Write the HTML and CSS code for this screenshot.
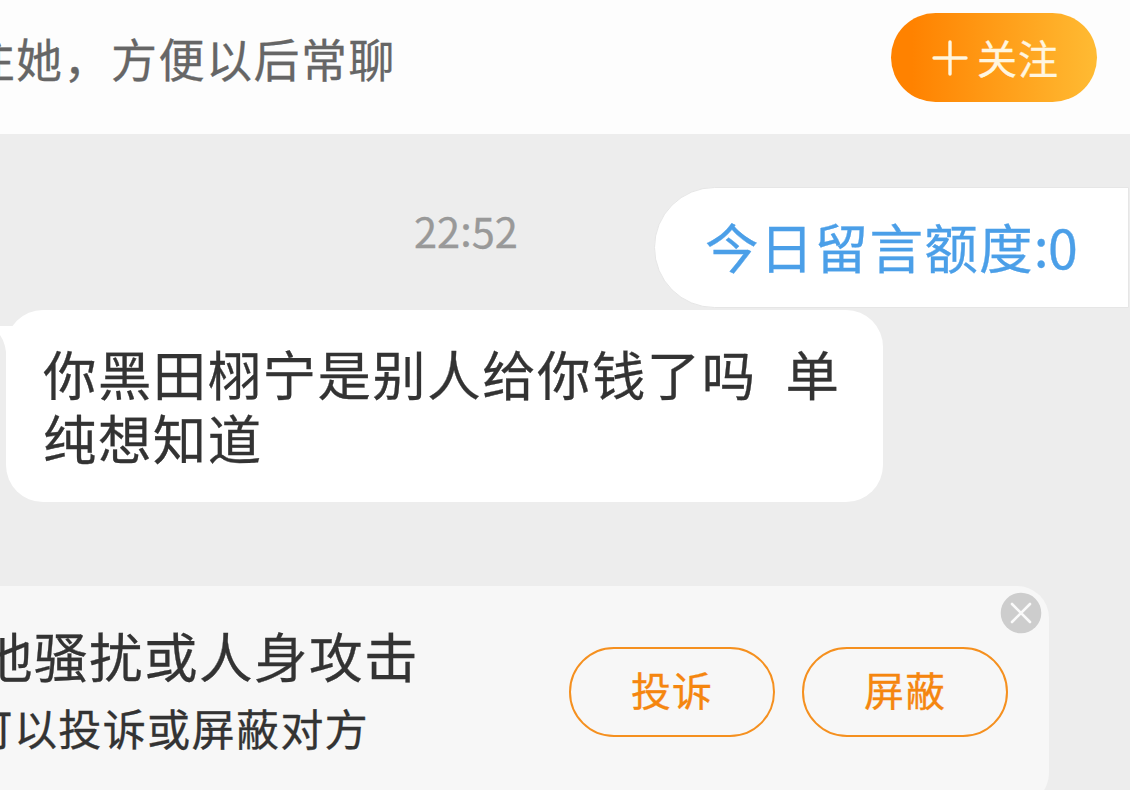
FILE: index.html
```html
<!DOCTYPE html>
<html lang="zh-CN">
<head>
<meta charset="utf-8">
<title>聊天</title>
<link rel="stylesheet" href="styles.css">
</head>
<body>
<div class="screen">
  <header class="follow-bar">
    <div class="follow-text"><span>注她，方便以后常聊</span></div>
    <button class="follow-btn">
      <svg class="plus" width="36" height="36" viewBox="0 0 36 36"><path d="M18 2v32M2 18h32" fill="none" stroke="#fff6e0" stroke-width="3.4" stroke-linecap="round"/></svg>
      <span>关注</span>
    </button>
  </header>
  <main class="chat">
    <div class="meta-row">
      <time class="time">22<span class="colon">:</span>52</time>
      <div class="quota">今日留言额度<span class="colon">:</span>0</div>
    </div>
    <div class="bubble">
      <svg class="tail" width="20" height="50" viewBox="0 0 20 50"><path d="M0 16H20V50H6.500Q6.500 34 0 25Z" fill="#fff"/></svg>
      <p class="message">你黑田栩宁是别人给你钱了吗<span class="gap">&nbsp; </span>单<br>纯想知道</p>
    </div>
    <section class="report">
      <div class="report-copy">
        <div class="report-title"><span>他骚扰或人身攻击</span></div>
        <div class="report-sub"><span>可以投诉或屏蔽对方</span></div>
      </div>
      <div class="report-actions">
        <button class="outline-btn">投诉</button>
        <button class="outline-btn">屏蔽</button>
      </div>
      <svg class="close" width="42" height="42" viewBox="0 0 42 42"><circle cx="21" cy="21" r="20.300" fill="#cdcdcd"/><path d="M12 12L30 30M30 12L12 30" fill="none" stroke="#fafafa" stroke-width="2.600" stroke-linecap="round"/></svg>
    </section>
  </main>
</div>
</body>
</html>
```
FILE: styles.css
```css
* { box-sizing: border-box; }
body { margin: 0; font-family: "Noto Sans CJK SC", sans-serif; -webkit-text-stroke: 0.3px currentColor; }
button { font-family: inherit; padding: 0; margin: 0; }

.screen { width: 1130px; height: 790px; overflow: hidden; display: flex; flex-direction: column; background: #ededed; }

.follow-bar { flex: none; height: 134px; background: #fdfdfd; display: flex; justify-content: space-between; padding: 13px 33px 0 0; }
.follow-text { width: 396px; height: 88px; display: flex; justify-content: flex-end; white-space: nowrap; font-size: 46px; letter-spacing: 1.5px; line-height: 88px; color: #666; }
.follow-btn { width: 206px; height: 89px; border: 0; border-radius: 45px; background: linear-gradient(90deg, #ff8200 10%, #ffbb33 100%); color: #fff6e0; display: flex; align-items: center; padding-left: 41px; gap: 9px; font-size: 40px; letter-spacing: 1px; line-height: 84px; }
.follow-btn span { padding-bottom: 1px; }
.plus { flex: none; }

.chat { flex: 1; display: flex; flex-direction: column; align-items: flex-start; }
.meta-row { width: 100%; height: 176px; flex: none; padding: 53px 0 0 414px; display: flex; }
.time { width: 240px; font-size: 41.6px; line-height: 86px; color: #999; }
.colon { position: relative; top: -2px; }
.quota { width: 475px; height: 121px; border: 1px solid #e6e6e6; border-radius: 61px 0 0 61px; background: #fff; padding-left: 50px; font-size: 53.6px; letter-spacing: 1.2px; line-height: 115px; white-space: nowrap; color: #4b9fe8; }
.quota .colon { letter-spacing: -0.8px; }

.bubble { position: relative; flex: none; width: 877px; height: 192px; margin-left: 6px; border-radius: 37px; background: #fff; padding: 31px 0 0 37px; }
.tail { position: absolute; left: -6px; top: 0; }
.message { margin: 0; font-size: 53.4px; letter-spacing: 1.5px; line-height: 64px; white-space: nowrap; color: #333; }
.gap { word-spacing: 1px; }

.report { position: relative; flex: none; width: 1049px; height: 219px; margin-top: 84px; border-radius: 0 32px 32px 0; background: #f7f7f7; display: flex; justify-content: space-between; padding: 35px 41px 0 0; }
.report-copy { width: 419px; color: #333; }
.report-title, .report-sub { display: flex; justify-content: flex-end; white-space: nowrap; }
.report-title { font-size: 53.6px; letter-spacing: 1.4px; line-height: 68px; }
.report-sub { width: 369px; margin-top: 6px; font-size: 43.2px; letter-spacing: 1.2px; line-height: 64px; }
.report-actions { display: flex; gap: 27px; padding-top: 26px; }
.outline-btn { width: 206px; height: 90px; border: 2px solid #f5901f; border-radius: 45px; background: transparent; color: #f5860f; font-size: 40px; letter-spacing: 1px; line-height: 80px; padding-bottom: 6px; }
.close { position: absolute; right: 7px; top: 6px; }
```
